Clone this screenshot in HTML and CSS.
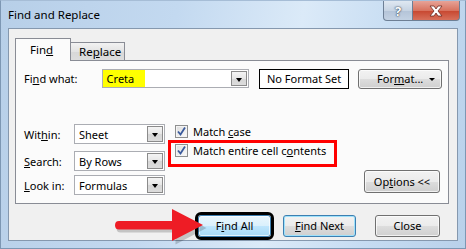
FILE: index.html
```html
<!DOCTYPE html>
<html>
<head>
<meta charset="utf-8">
<link rel="stylesheet" href="styles.css">
</head>
<body>
<div class="window">
  <div class="titlebar">
    <span class="title">Find and Replace</span>
    <div class="caption">
      <div class="cbtn help">?</div>
      <div class="cbtn close"><svg width="16" height="12" viewBox="0 0 16 12"><path d="M2 1 L6 1 L8 4 L10 1 L14 1 L10 6 L14 11 L10 11 L8 8 L6 11 L2 11 L6 6 Z" fill="#fff" stroke="#6b2a22" stroke-width="0.8"/></svg></div>
    </div>
  </div>
  <div class="client">
    <div class="tabs">
      <div class="tab active">Fin<u>d</u></div>
      <div class="tab">Re<u>p</u>lace</div>
    </div>
    <div class="panel">
      <div class="row1">
        <span class="lbl wlbl">Fi<u>n</u>d what:</span>
        <div class="combo findcombo"><span class="hl">Creta</span><span class="dd"></span></div>
        <div class="nfs">No Format Set</div>
        <div class="btn fmt"><span>For<u>m</u>at...</span><span class="caret"></span></div>
      </div>
      <div class="lower">
        <div class="leftcol">
          <div class="frow"><span class="lbl slbl">Wit<u>h</u>in:</span><div class="combo small"><span>Sheet</span><span class="dd"></span></div></div>
          <div class="frow r2"><span class="lbl slbl"><u>S</u>earch:</span><div class="combo small"><span>By Rows</span><span class="dd"></span></div></div>
          <div class="frow r3"><span class="lbl slbl"><u>L</u>ook in:</span><div class="combo small"><span>Formulas</span><span class="dd"></span></div></div>
        </div>
        <div class="checks">
          <div class="chk"><span class="box"><svg width="11" height="11" viewBox="0 0 11 11"><path d="M2 5.5 L4.5 8.5 L9 1.5" fill="none" stroke="#3a5a9c" stroke-width="1.8"/></svg></span><span>Match <u>c</u>ase</span></div>
          <div class="chk hot"><span class="box"><svg width="11" height="11" viewBox="0 0 11 11"><path d="M2 5.5 L4.5 8.5 L9 1.5" fill="none" stroke="#3a5a9c" stroke-width="1.8"/></svg></span><span>Match entire cell c<u>o</u>ntents</span></div>
        </div>
        <div class="btn opt"><span>Op<u>t</u>ions &lt;&lt;</span></div>
      </div>
    </div>
    <div class="actions">
      <svg class="arrow" width="94" height="38" viewBox="0 0 94 38"><path d="M5 14.5 L60 14.5 L60 2 L91 18.5 L60 35 L60 23 L5 23 Q1 23 1 18.75 Q1 14.5 5 14.5 Z" fill="#000" opacity="0.18" transform="translate(1.5,1.5)"/><path d="M5 13 L58 13 L58 1 L89 17 L58 33 L58 21.5 L5 21.5 Q1 21.5 1 17.25 Q1 13 5 13 Z" fill="#ee1c25"/></svg>
      <div class="btn act findall"><span>F<u>i</u>nd All</span></div>
      <div class="btn act findnext"><span><u>F</u>ind Next</span></div>
      <div class="btn act close2"><span>Close</span></div>
    </div>
  </div>
</div>
</body>
</html>
```
FILE: styles.css
```css
* { box-sizing: border-box; }
html, body { margin: 0; padding: 0; }
body {
  width: 466px; height: 249px; overflow: hidden;
  font-family: "Noto Sans", "DejaVu Sans", sans-serif;
  font-size: 11px; color: #000;
  background: #b9d1ea;
}
u { text-decoration: underline; text-underline-offset: 1px; }
.window {
  position: relative;
  width: 466px; height: 249px;
  padding: 27px 7px 7px 7px;
  background: linear-gradient(100deg, #b7cfe8 0%, #c3d9f0 35%, #dbeaf8 60%, #c6dcf2 80%, #b9d1ea 100%);
  border: 1px solid #7d97b3;
  border-top-color: #a6bdd6;
}
.titlebar {
  position: absolute; left: 0; top: 0; right: 0; height: 27px;
  display: flex; align-items: flex-start;
}
.title { margin: 6px 0 0 7px; font-size: 11.5px; color: #000; }
.caption { margin-left: auto; margin-right: 5px; display: flex; }
.cbtn {
  height: 20px; display: flex; align-items: center; justify-content: center;
  border: 1px solid #6d7f95; border-top: none;
}
.help {
  width: 30px; border-radius: 0 0 0 4px;
  background: linear-gradient(#dfe8f2, #c7d4e3 50%, #b4c4d8 51%, #c3d2e3);
  color: #fff; font-weight: bold; font-size: 13px;
  text-shadow: 0 0 2px #2d3b4e, 0 0 1px #2d3b4e;
}
.close {
  width: 47px; border-left: none; border-radius: 0 0 4px 0;
  background: linear-gradient(#e7a397, #d8735f 50%, #c7462f 51%, #d7705b);
}
.client {
  height: 100%;
  background: #f0f0f0;
  border: 1px solid #8598ae;
  padding: 9px 8px 0 6px;
}
.tabs { display: flex; align-items: flex-end; height: 22px; position: relative; z-index: 2; }
.tab {
  height: 18px; padding: 0 8px;
  border: 1px solid #898c95; border-bottom: none;
  background: linear-gradient(#f2f2f2, #e3e3e3 50%, #d8d8d8 51%, #dddddd);
  display: flex; align-items: center;
  margin-left: -1px;
  font-size: 11.5px;
}
.tab:first-child { margin-left: 0; }
.tab.active {
  height: 23px; width: 56px; margin-bottom: -1px; padding: 0 0 2px 14px;
  background: #fbfbfb; z-index: 3;
}
.tab:not(.active) { width: 55px; padding-left: 8px; }
.panel {
  height: 144px;
  background: #fbfbfb;
  border: 1px solid #898c95;
  padding: 8px 6px 0 8px;
  position: relative;
}
.row1 { display: flex; align-items: center; height: 19px; }
.lbl { display: inline-block; }
.wlbl { width: 78px; }
.slbl { width: 50px; }
.combo {
  position: relative;
  height: 20px; border: 1px solid #abadb3; background: #fff;
  display: flex; align-items: center; padding-left: 4px;
}
.findcombo { width: 148px; height: 19px; padding-left: 0; }
.hl { background: #ffff00; height: 100%; width: 42px; display: flex; align-items: center; padding-left: 4px; }
.dd {
  position: absolute; right: 1px; top: 1px; bottom: 1px; width: 16px;
  border: 1px solid #8b8b8b;
  background: linear-gradient(#f4f4f4, #e6e6e6 50%, #d6d6d6 51%, #dcdcdc);
}
.dd::after {
  content: ""; position: absolute; left: 4px; top: 6px;
  border-left: 3.5px solid transparent; border-right: 3.5px solid transparent; border-top: 4px solid #000;
}
.nfs {
  margin-left: 10px; width: 91px; height: 20px;
  border: 1px solid #000; background: #fff;
  display: flex; align-items: center; justify-content: center;
}
.btn {
  border: 1px solid #707070; border-radius: 3px;
  background: linear-gradient(#f2f2f2, #ebebeb 50%, #dddddd 51%, #cfcfcf);
  display: flex; align-items: center; justify-content: center;
  box-shadow: inset 0 0 0 1px rgba(255,255,255,0.7);
}
.fmt { margin-left: 9px; width: 84px; height: 20px; position: relative; }
.caret {
  position: absolute; right: 6px; top: 8px;
  border-left: 3px solid transparent; border-right: 3px solid transparent; border-top: 3px solid #000;
}
.lower { display: flex; margin-top: 36px; align-items: flex-start; }
.leftcol { display: flex; flex-direction: column; }
.frow { display: flex; align-items: center; height: 20px; }
.r2 { margin-top: 7px; }
.r3 { margin-top: 4px; }
.small { width: 91px; }
.checks { margin-left: 10px; margin-top: 1px; display: flex; flex-direction: column; gap: 6px; }
.chk { display: flex; align-items: center; height: 13px; position: relative; }
.box {
  width: 13px; height: 13px; border: 1px solid #8e8f8f; margin-right: 5px;
  background: linear-gradient(135deg, #dcdcdc, #fbfbfb);
  box-shadow: inset 0 0 0 1px #f4f4f4;
  display: flex; align-items: center; justify-content: center;
}
.hot::after {
  content: ""; position: absolute; left: -7px; top: -4px; width: 163px; height: 21px;
  border: 3px solid #ff0000;
}
.opt { margin-left: auto; margin-right: 2px; margin-top: 46px; width: 76px; height: 23px; }
.actions {
  position: relative;
  display: flex; justify-content: flex-end; align-items: center;
  padding-right: 9px; margin-top: 10px; height: 23px;
}
.arrow { position: absolute; left: 99px; top: -6px; }
.act { height: 22px; }
.findall {
  width: 73px;
  border-color: #3c7fb1;
  background: linear-gradient(#eaf6fd, #d9f0fc 50%, #bee6fd 51%, #a7d9f5);
  outline: 3px solid #000;
  outline-offset: 0;
  margin-right: 12px;
}
.findnext {
  width: 73px; margin-right: 19px;
  border-color: #3c7fb1;
  box-shadow: inset 0 0 0 1px #9ee1fb;
}
.close2 { width: 65px; }
```
